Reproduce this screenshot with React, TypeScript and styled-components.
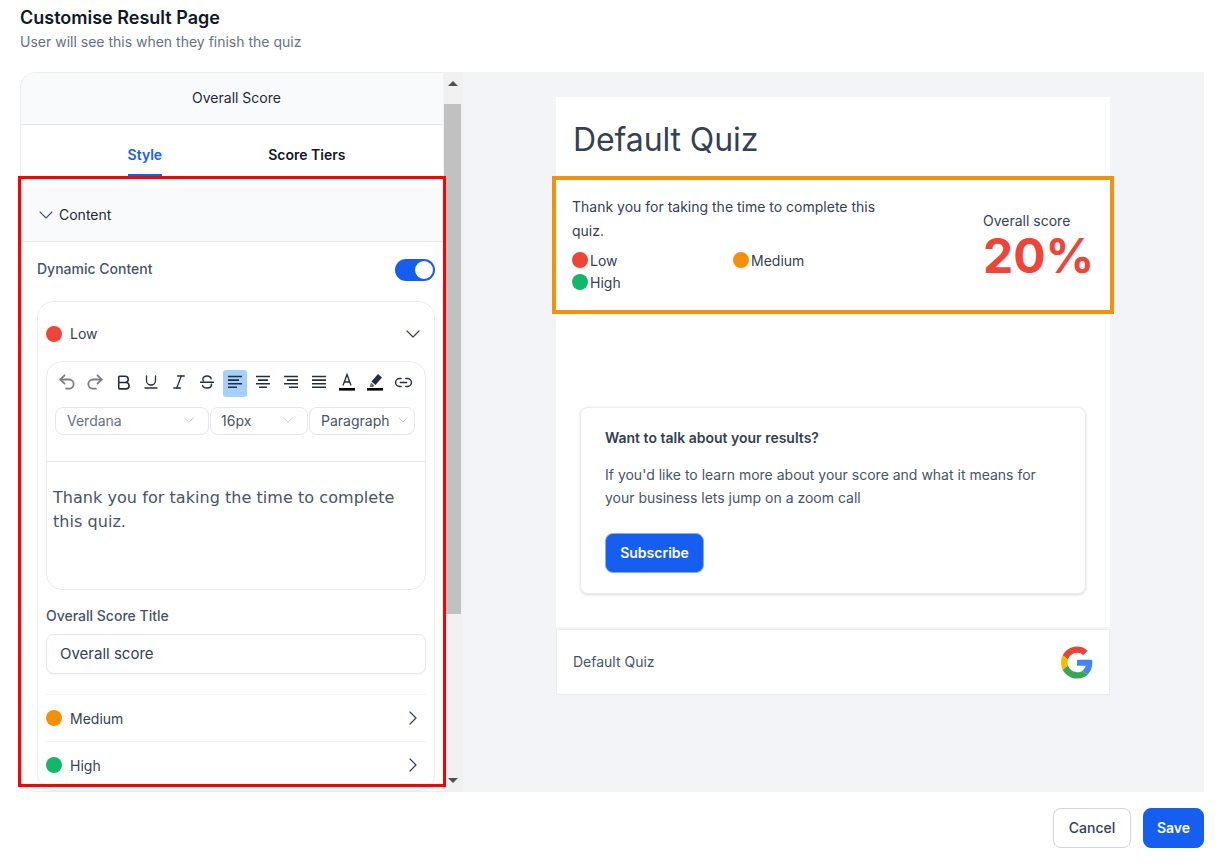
import React from "react";
import styled, { createGlobalStyle } from "styled-components";
import { Undo2, Redo2, Bold, Underline, Italic, Link2, ChevronDown, ChevronRight } from "lucide-react";

const Global = createGlobalStyle`
  html, body { margin: 0; padding: 0; background: #fff; }
  body { font-family: Inter, "Liberation Sans", sans-serif; color: #344054; }
  * { box-sizing: border-box; }
`;
const Page = styled.div`
  position: relative;
  width: 1224px;
  height: 866px;
  overflow: hidden;
  padding: 4px 20px 0;
`;
const Title = styled.h1`
  margin: 0;
  font-size: 18px;
  line-height: 28px;
  font-weight: 600;
  color: #101828;
`;
const Subtitle = styled.p`
  margin: 0;
  font-size: 14px;
  line-height: 20px;
  color: #667085;
`;
const Main = styled.div`
  display: flex;
  height: 720px;
  margin-top: 20px;
`;
const Panel = styled.div`
  width: 423px;
  height: 720px;
  overflow: hidden;
  background: #fff;
  border: 1px solid #eaecf0;
  border-right: 0;
  border-radius: 16px 0 0 16px;
`;
const PanelHead = styled.div`
  height: 52px;
  padding: 0 0 2px 9px;
  display: flex;
  align-items: center;
  justify-content: center;
  background: #f9fafb;
  border-bottom: 1px solid #e4e7ec;
  font-size: 14px;
  color: #1d2939;
`;
const Tabs = styled.div`
  height: 51px;
  padding-left: 9px;
  display: flex;
  justify-content: center;
  gap: 106px;
`;
const Tab = styled.div<{ $active?: boolean }>`
  height: 51px;
  line-height: 60px;
  font-size: 14px;
  font-weight: 600;
  color: ${(p) => (p.$active ? "#155eef" : "#101828")};
  border-bottom: 2px solid ${(p) => (p.$active ? "#155eef" : "transparent")};
`;
const SectionHead = styled.div`
  margin-top: 12px;
  height: 54px;
  display: flex;
  align-items: center;
  gap: 1px;
  padding-left: 13px;
  background: #f9fafb;
  border-bottom: 1px solid #eaecf0;
  font-size: 14px;
  color: #1d2939;
  svg { color: #475467; }
`;
const DynamicRow = styled.div`
  height: 59px;
  padding: 0 8px 3px 16px;
  display: flex;
  align-items: center;
  justify-content: space-between;
`;
const DynamicLabel = styled.span`
  margin-bottom: 3px;
  font-size: 14px;
  font-weight: 500;
  color: #475467;
`;
const Toggle = styled.div`
  width: 40px;
  height: 22px;
  border-radius: 11px;
  background: #155eef;
  padding: 2px 2px 2px 20px;
`;
const Knob = styled.div`
  width: 18px;
  height: 18px;
  border-radius: 50%;
  background: #fff;
`;
const Nested = styled.div`
  margin: 0 8px 0 16px;
  height: 490px;
  padding: 0 8px;
  border: 1px solid #eaecf0;
  border-radius: 16px;
`;
const TierRow = styled.div<{ $h: number; $line?: boolean; $top?: number }>`
  height: ${(p) => p.$h}px;
  padding-top: ${(p) => p.$top ?? 0}px;
  display: flex;
  align-items: center;
  gap: 8px;
  font-size: 14px;
  color: #344054;
  border-top: ${(p) => (p.$line ? "1px solid #f2f4f7" : "0")};
  svg { margin-left: auto; margin-right: 1px; color: #344054; }
`;
const Dot = styled.span<{ $c: string }>`
  flex: none;
  width: 16px;
  height: 16px;
  border-radius: 50%;
  background: ${(p) => p.$c};
`;
const Editor = styled.div`
  height: 229px;
  border: 1px solid #eaecf0;
  border-radius: 16px;
  overflow: hidden;
`;
const Toolbar = styled.div`
  display: flex;
  gap: 4px;
  padding: 8px 8px 0;
`;
const ToolBtn = styled.div<{ $active?: boolean; $c?: string }>`
  width: 24px;
  height: 27px;
  padding-bottom: 3px;
  border-radius: 3px;
  display: flex;
  align-items: center;
  justify-content: center;
  background: ${(p) => (p.$active ? "#a6d0f9" : "transparent")};
  color: ${(p) => p.$c ?? "#222f3e"};
`;
const Selects = styled.div`
  display: flex;
  gap: 1px;
  padding: 10px 8px 0;
`;
const Select = styled.div<{ $w: number; $c: string; $pad?: number }>`
  width: ${(p) => p.$w}px;
  height: 28px;
  padding: 0 10px 2px ${(p) => p.$pad ?? 11}px;
  display: flex;
  align-items: center;
  justify-content: space-between;
  border: 1px solid #e4e7ec;
  border-radius: 8px;
  font-size: 14px;
  color: ${(p) => p.$c};
  white-space: nowrap;
  svg { flex: none; color: #b0b5c0; }
`;
const EditorBody = styled.div`
  margin-top: 26px;
  border-top: 1px solid #e4e7ec;
  padding: 24px 6px 0;
  font-family: "DejaVu Sans", Verdana, sans-serif;
  font-size: 16px;
  line-height: 24px;
  letter-spacing: 0.05px;
  color: #475467;
`;
const FieldLabel = styled.div`
  margin-top: 16px;
  font-size: 14px;
  line-height: 20px;
  font-weight: 500;
  color: #475467;
`;
const Input = styled.div`
  margin: 8px 0 20px;
  height: 40px;
  padding: 0 13px 2px;
  display: flex;
  align-items: center;
  border: 1px solid #e4e7ec;
  border-radius: 8px;
  box-shadow: 0 1px 2px rgba(16, 24, 40, 0.05);
  font-size: 15px;
  color: #344054;
`;
const Scrollbar = styled.div`
  flex: none;
  width: 20px;
  height: 720px;
  background: #f1f1f1;
  display: flex;
  flex-direction: column;
`;
const ArrowCell = styled.div`
  flex: none;
  height: 32px;
  display: flex;
  justify-content: center;
  padding: 9px 1px 0 0;
`;
const ArrowUp = styled.div`
  width: 0;
  height: 0;
  border-left: 5px solid transparent;
  border-right: 5px solid transparent;
  border-bottom: 5px solid #505050;
`;
const ArrowDown = styled(ArrowUp)`
  border-bottom: 0;
  border-top: 5px solid #505050;
`;
const BottomCell = styled(ArrowCell)`
  margin-top: auto;
  height: 14px;
  padding-top: 0;
`;
const Thumb = styled.div`
  flex: none;
  height: 510px;
  margin: 0 2px 0 1px;
  background: #c1c1c1;
`;
const Preview = styled.div`
  flex: 1;
  padding: 25px 94px 0 93px;
  background: #f2f4f7;
`;
const QuizCard = styled.div`
  height: 530px;
  background: #fff;
`;
const QuizTitle = styled.div`
  height: 79px;
  padding: 24px 0 0 17px;
  font-size: 32px;
  line-height: 38px;
  letter-spacing: -0.1px;
  color: #344054;
`;
const ScoreBox = styled.div`
  margin: 0 -4px;
  height: 138px;
  padding: 15px 19px 0 16px;
  border: 4px solid #f79009;
  display: flex;
  justify-content: space-between;
`;
const ScoreLeft = styled.div`
  width: 322px;
`;
const ThankYou = styled.p`
  margin: 0 0 6px;
  font-size: 14px;
  line-height: 24px;
  color: #344054;
`;
const Legend = styled.div`
  display: grid;
  grid-template-columns: 161px 161px;
`;
const LegendItem = styled.div`
  height: 22px;
  display: flex;
  align-items: center;
  gap: 2px;
  font-size: 14px;
  color: #344054;
`;
const ScoreRight = styled.div`
  width: 108px;
  margin-top: 16px;
`;
const ScoreLabel = styled.div`
  font-size: 14px;
  line-height: 20px;
  color: #344054;
`;
const ScoreValue = styled.div`
  font-size: 48px;
  line-height: 50px;
  font-weight: 700;
  color: #f04438;
  white-space: nowrap;
`;
const Cta = styled.div`
  margin: 93px 24px 0 24px;
  height: 187px;
  padding: 20px 24px 0;
  background: #fff;
  border: 1px solid #eaecf0;
  border-radius: 8px;
  box-shadow: 0 1px 3px rgba(16, 24, 40, 0.15);
`;
const CtaTitle = styled.div`
  font-size: 14px;
  line-height: 20px;
  font-weight: 600;
  color: #344054;
`;
const CtaText = styled.p`
  margin: 15px 0 24px;
  font-size: 14px;
  line-height: 23px;
  color: #475467;
`;
const Primary = styled.button<{ $w: number }>`
  width: ${(p) => p.$w}px;
  height: 40px;
  padding: 0 0 2px;
  border: 1px solid #155eef;
  border-radius: 8px;
  background: #155eef;
  color: #fff;
  font-family: inherit;
  font-size: 14px;
  font-weight: 600;
`;
const SubscribeBtn = styled(Primary)`
  border-color: #84adff;
`;
const Footer = styled.div`
  margin-top: 2px;
  height: 66px;
  padding: 0 16px;
  display: flex;
  align-items: center;
  justify-content: space-between;
  background: #fff;
  border: 1px solid #eaecf0;
  font-size: 14px;
  color: #475467;
`;
const FooterName = styled.span`
  margin-bottom: 2px;
`;
const Actions = styled.div`
  margin-top: 16px;
  display: flex;
  justify-content: flex-end;
  gap: 12px;
`;
const Secondary = styled.button`
  width: 78px;
  height: 40px;
  padding: 0 0 2px;
  border: 1px solid #d0d5dd;
  border-radius: 8px;
  background: #fff;
  color: #344054;
  font-family: inherit;
  font-size: 14px;
  font-weight: 500;
`;
const RedFrame = styled.div`
  position: absolute;
  left: 18px;
  top: 176px;
  width: 428px;
  height: 611px;
  border: 3px solid #ff0000;
  pointer-events: none;
`;

const LinesIcon = ({ rows }: { rows: [number, number][] }) => (
  <svg width="16" height="14" viewBox="0 0 16 14" fill="none" stroke="currentColor" strokeWidth="1.6">
    {rows.map(([a, b], i) => (
      <path key={i} d={`M${a} ${1.5 + i * 3.6}H${b}`} />
    ))}
  </svg>
);
const StrikeIcon = () => (
  <svg width="16" height="16" viewBox="0 0 16 16" fill="none" stroke="currentColor" strokeWidth="1.4">
    <path d="M12.4 5.4C12 3 10.2 2 8 2 5.6 2 3.8 3.2 3.8 5.2c0 1 .4 1.8 1 2.4" />
    <path d="M1 8.2h14" />
    <path d="M12.2 9.6c.2.4.3.8.3 1.2 0 2-1.9 3.2-4.5 3.2-2.4 0-4.2-1-4.5-3.2" />
  </svg>
);
const TextColorIcon = () => (
  <svg width="18" height="20" viewBox="0 0 18 20" fill="none">
    <path d="M5 13.5 9 2.5l4 11M6.4 10h5.2" stroke="#222f3e" strokeWidth="1.3" />
    <rect x="1" y="16" width="16" height="2.6" fill="#000" />
  </svg>
);
const HighlightIcon = () => (
  <svg width="18" height="20" viewBox="0 0 18 20" fill="none">
    <path d="M12 2l4 3.5-6.5 7.5-4-3.5z" fill="#222f3e" />
    <path d="M5 10.5l3.5 3L7 15H3.5z" fill="#6b7280" />
    <rect x="1" y="16" width="16" height="2.6" fill="#000" />
  </svg>
);
const GoogleLogo = () => (
  <svg width="32" height="33" viewBox="0 0 48 48">
    <path fill="#EA4335" d="M24 9.5c3.54 0 6.71 1.22 9.21 3.6l6.85-6.85C35.9 2.38 30.47 0 24 0 14.62 0 6.51 5.38 2.56 13.22l7.98 6.19C12.43 13.72 17.74 9.5 24 9.5z" />
    <path fill="#4285F4" d="M46.98 24.55c0-1.57-.15-3.09-.38-4.55H24v9.02h12.94c-.58 2.96-2.26 5.48-4.78 7.18l7.73 6c4.51-4.18 7.09-10.36 7.09-17.65z" />
    <path fill="#FBBC05" d="M10.53 28.59c-.48-1.45-.76-2.99-.76-4.59s.27-3.14.76-4.59l-7.98-6.19C.92 16.46 0 20.12 0 24c0 3.88.92 7.54 2.56 10.78l7.97-6.19z" />
    <path fill="#34A853" d="M24 48c6.48 0 11.93-2.13 15.89-5.81l-7.73-6c-2.15 1.45-4.92 2.3-8.16 2.3-6.26 0-11.57-4.22-13.47-9.91l-7.98 6.19C6.51 42.62 14.62 48 24 48z" />
  </svg>
);

export default function App() {
  return (
    <Page>
      <Global />
      <Title>Customise Result Page</Title>
      <Subtitle>User will see this when they finish the quiz</Subtitle>
      <Main>
        <Panel>
          <PanelHead>Overall Score</PanelHead>
          <Tabs>
            <Tab $active>Style</Tab>
            <Tab>Score Tiers</Tab>
          </Tabs>
          <SectionHead>
            <ChevronDown size={24} strokeWidth={1.1} />
            Content
          </SectionHead>
          <DynamicRow>
            <DynamicLabel>Dynamic Content</DynamicLabel>
            <Toggle><Knob /></Toggle>
          </DynamicRow>
          <Nested>
            <TierRow $h={59} $top={4}>
              <Dot $c="#f04438" />
              Low
              <ChevronDown size={24} strokeWidth={1.2} />
            </TierRow>
            <Editor>
              <Toolbar>
                <ToolBtn $c="#7b8088"><Undo2 size={20} strokeWidth={2.2} /></ToolBtn>
                <ToolBtn $c="#7b8088"><Redo2 size={20} strokeWidth={2.2} /></ToolBtn>
                <ToolBtn><Bold size={19} strokeWidth={2} /></ToolBtn>
                <ToolBtn><Underline size={18} strokeWidth={1.7} /></ToolBtn>
                <ToolBtn><Italic size={18} strokeWidth={1.7} /></ToolBtn>
                <ToolBtn><StrikeIcon /></ToolBtn>
                <ToolBtn $active><LinesIcon rows={[[1, 15], [1, 12], [1, 15], [1, 10]]} /></ToolBtn>
                <ToolBtn><LinesIcon rows={[[1, 15], [3, 13], [1, 15], [4, 12]]} /></ToolBtn>
                <ToolBtn><LinesIcon rows={[[1, 15], [4, 15], [1, 15], [6, 15]]} /></ToolBtn>
                <ToolBtn><LinesIcon rows={[[1, 15], [1, 15], [1, 15], [1, 15]]} /></ToolBtn>
                <ToolBtn><TextColorIcon /></ToolBtn>
                <ToolBtn><HighlightIcon /></ToolBtn>
                <ToolBtn><Link2 size={19} strokeWidth={1.8} /></ToolBtn>
              </Toolbar>
              <Selects>
                <Select $w={154} $c="#667085">Verdana<ChevronDown size={18} strokeWidth={1} /></Select>
                <Select $w={98} $c="#475467" $pad={10}>16px<ChevronDown size={18} strokeWidth={1} /></Select>
                <Select $w={106} $c="#475467">Paragraph<ChevronDown size={16} strokeWidth={1} style={{ marginRight: -7 }} /></Select>
              </Selects>
              <EditorBody>Thank you for taking the time to complete this quiz.</EditorBody>
            </Editor>
            <FieldLabel>Overall Score Title</FieldLabel>
            <Input>Overall score</Input>
            <TierRow $h={47} $line>
              <Dot $c="#f79009" />
              Medium
              <ChevronRight size={24} strokeWidth={1.2} />
            </TierRow>
            <TierRow $h={47} $line>
              <Dot $c="#12b76a" />
              High
              <ChevronRight size={24} strokeWidth={1.2} />
            </TierRow>
          </Nested>
        </Panel>
        <Scrollbar>
          <ArrowCell><ArrowUp /></ArrowCell>
          <Thumb />
          <BottomCell><ArrowDown /></BottomCell>
        </Scrollbar>
        <Preview>
          <QuizCard>
            <QuizTitle>Default Quiz</QuizTitle>
            <ScoreBox>
              <ScoreLeft>
                <ThankYou>Thank you for taking the time to complete this quiz.</ThankYou>
                <Legend>
                  <LegendItem><Dot $c="#f04438" />Low</LegendItem>
                  <LegendItem><Dot $c="#f79009" />Medium</LegendItem>
                  <LegendItem><Dot $c="#12b76a" />High</LegendItem>
                </Legend>
              </ScoreLeft>
              <ScoreRight>
                <ScoreLabel>Overall score</ScoreLabel>
                <ScoreValue>20%</ScoreValue>
              </ScoreRight>
            </ScoreBox>
            <Cta>
              <CtaTitle>Want to talk about your results?</CtaTitle>
              <CtaText>If you'd like to learn more about your score and what it means for your business lets jump on a zoom call</CtaText>
              <SubscribeBtn $w={99}>Subscribe</SubscribeBtn>
            </Cta>
          </QuizCard>
          <Footer>
            <FooterName>Default Quiz</FooterName>
            <GoogleLogo />
          </Footer>
        </Preview>
      </Main>
      <Actions>
        <Secondary>Cancel</Secondary>
        <Primary $w={61}>Save</Primary>
      </Actions>
      <RedFrame />
    </Page>
  );
}
